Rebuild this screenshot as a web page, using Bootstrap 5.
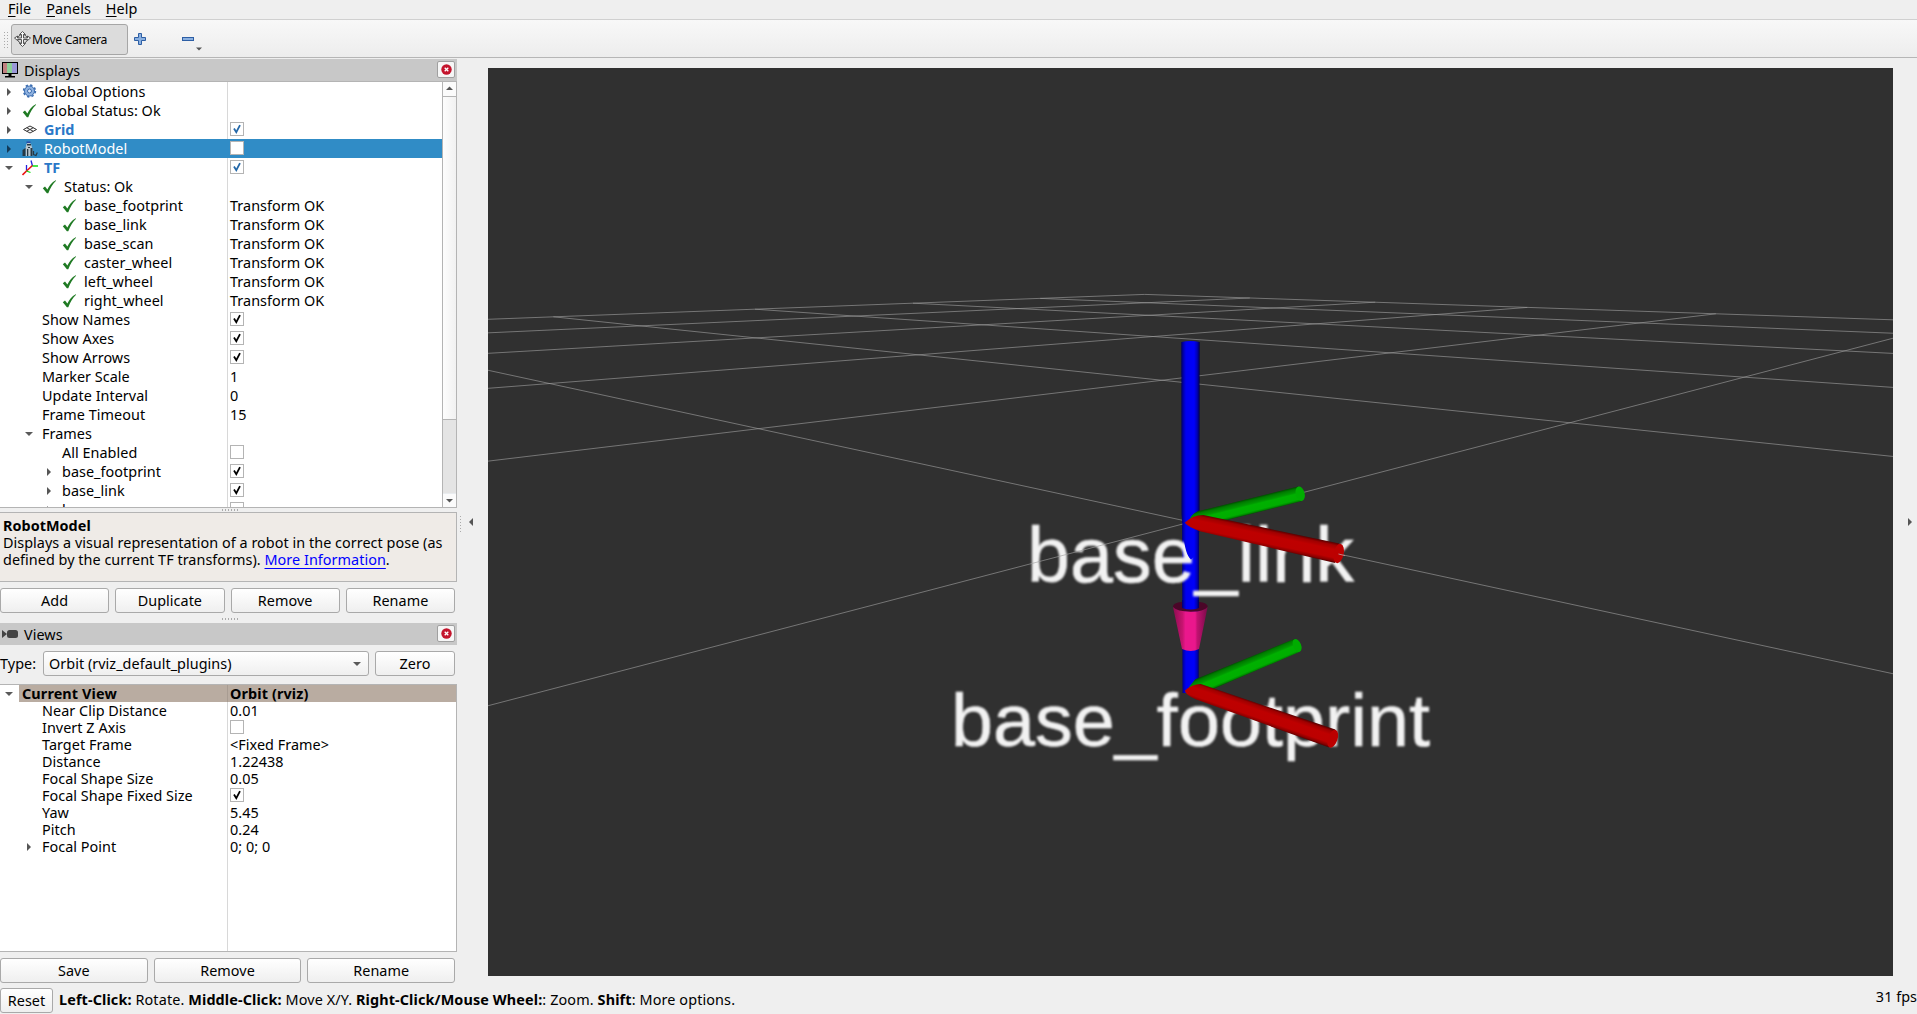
<!DOCTYPE html>
<html lang="en">
<head>
<meta charset="utf-8">
<title>RViz</title>
<link href="https://cdn.jsdelivr.net/npm/bootstrap@5.3.0/dist/css/bootstrap.min.css" rel="stylesheet">
<style>
body{width:1917px;height:1014px;overflow:hidden;background:#efefef;color:#000;font-family:"Noto Sans","Open Sans",sans-serif;font-size:14.4px;letter-spacing:.04px;line-height:17px;white-space:nowrap}
svg{display:block;flex:none}
.menubar{height:20px;border-bottom:1px solid #d0d0d0;padding-left:8px;gap:15px;line-height:18px}
.menubar u{text-underline-offset:2px;text-decoration-thickness:1px}
.toolstrip{height:38px;border-bottom:1px solid #b6b6b6;background:linear-gradient(#f8f8f8,#ededed);padding:4px 0 3px 3px}
.movebtn{width:117px;height:31px;margin-left:3px;padding:0 2px;border:1px solid #a6a6a6;border-radius:3px;background:#dcdcdc;font-size:12.2px;letter-spacing:-.35px;gap:1px}
.dots-v{width:5px;height:17px;background:radial-gradient(circle,#aaa 35%,transparent 45%) 0 0/3px 3px}
.leftdock{width:457px}
.docktitle{height:22px;background:#c8c8c8;padding:0 2px 0 2px}
.docktitle span{margin-left:6px}
.closebtn{width:18px;height:17px;border:1px solid #a0a0a0;border-radius:2px;background:#f6f6f6;margin-bottom:2px}
.treebox{border:1px solid #b4b4b4;border-left:0;background:#fff;overflow:hidden;flex:none}
.t1{height:427px}.t2{height:268px}
.trow{height:19px}
.t2 .trow{height:17px}
.nm{width:228px;height:100%;border-right:1px solid #d8d8d8;padding-left:3px;flex:none}
.vl{padding-left:2px}
.ind1{padding-left:23px}.ind2{padding-left:42px}.ind3{padding-left:62px}
.ex{width:12px;height:12px;margin-right:7px}
.ind2 .ex{margin-left:1px}
.ic{width:16px;height:16px;margin-right:6px}
.sel{background:#308cc6;color:#fff}
.sel .nm{border-color:#308cc6}
.disp{font-weight:700;color:#2a78c8}
.bx{width:14px;height:14px;border:1px solid #b4b4b4;background:#fff;color:#000;margin-top:-1px}
.bx svg{width:12px;height:12px}
.bl{color:#2468a8}
.scrollcol{width:14px;border-left:1px solid #b4b4b4;background:#e4e4e4}
.scrollcol .end{height:14px;background:#fbfbfb}
.scrollcol .thumb{height:324px;background:linear-gradient(90deg,#fdfdfd,#f1f1f1);border-top:1px solid #b4b4b4;border-bottom:1px solid #b4b4b4}
.hdots{width:17px;height:4px;flex:none;background:radial-gradient(circle,#aaa 40%,transparent 50%) 0 1px/3px 2px repeat-x;margin-left:221px}
.hdots.wide{height:10px;background-position:0 5px}
.helpbox{height:70px;flex:none;border:1px solid #b4b4b4;border-left:0;background:#efebe7;padding:4px 0 0 3px;line-height:17px}
.helpbox a{color:#00f;text-decoration:underline;text-underline-offset:3px}
.btnline{gap:6px;margin:6px 2px 0 0}
.qbtn{border:1px solid #a9a9a9;border-radius:3px;background:linear-gradient(#fff,#efefef);height:25px;flex:1 1 0;padding:0;color:#000;font-size:inherit;letter-spacing:inherit;line-height:23px;text-align:center}
.combo{width:326px;flex:none;text-align:left;padding:0 5px 0 5px}
.hdrow .nm{padding-left:3px;background:linear-gradient(90deg,#fff 19px,#b9aca1 19px);border-color:#a89c92}
.hdrow{background:#b9aca1;font-weight:700;letter-spacing:.12px}
.view3d{width:1405px;height:908px;margin-top:10px;background:#303030}
.view3d text{font-family:"Liberation Sans",Arial,sans-serif;fill:#f2f2f2;stroke:#f2f2f2;stroke-width:.6}
.gutterL{width:31px}
.statusline{letter-spacing:.12px}
</style>
<script src="https://cdn.jsdelivr.net/npm/bootstrap@5.3.0/dist/js/bootstrap.bundle.min.js"></script>
</head>
<body class="d-flex flex-column">
<svg width="0" height="0" class="position-absolute">
<symbol id="r" viewBox="0 0 12 12"><path d="M4 2l4 4-4 4z" fill="#555"/></symbol>
<symbol id="d" viewBox="0 0 12 12"><path d="M2 4h8L6 8z" fill="#5a5a5a"/></symbol>
<symbol id="ok" viewBox="0 0 16 16"><path d="M.8 9.200l2.200-1.800 2.400 3.200C7.300 6.500 9.700 3.300 13.700 1.200l.4.6C10.700 5 8.300 9 6.300 14.200H4.900z" fill="#1f7a23"/></symbol>
<symbol id="ck" viewBox="0 0 12 12"><path d="M3 5.500L5.300 9.200 9 2.200" fill="none" stroke="currentColor" stroke-width="1.800"/></symbol>
<symbol id="x" viewBox="0 0 11 11"><circle cx="5.500" cy="5.500" r="5.200" fill="#c4142c"/><path d="M3.700 3.700l3.600 3.600M7.300 3.700L3.700 7.300" stroke="#fff" stroke-width="1.300"/></symbol>
</svg>

<nav class="menubar d-flex"><span><u>F</u>ile</span><span><u>P</u>anels</span><span><u>H</u>elp</span></nav>
<div class="toolstrip d-flex align-items-center">
  <div class="dots-v"></div>
  <div class="movebtn d-flex align-items-center">
    <svg width="17" height="16" viewBox="0 0 17 16" fill="#fafafa" stroke="#444" stroke-width=".9"><ellipse cx="8.500" cy="8" rx="4.800" ry="4.500" fill="none"/><path d="M7.500 7V3.500H5.500L8.500.5l3 3h-2V7h4V5l3 2-3 2.500V8.500h-4v4h2l-3 3-3-3h2v-4h-4v1L.5 7l3-2v2z"/></svg>
    <span>Move Camera</span>
  </div>
  <svg class="ms-1" width="14" height="12" viewBox="-2 0 14 12"><path d="M4.500.5h3v4h4v3h-4v4h-3v-4h-4v-3h4z" fill="#8ab0e0" stroke="#2d5ea4"/></svg>
  <svg width="58" height="26" viewBox="-36 -3 58 26"><rect x=".5" y="8.500" width="11" height="3" fill="#8ab0e0" stroke="#2d5ea4"/><path d="M14 18.500h6l-3 3z" fill="#555"/></svg>
</div>

<div class="d-flex" style="height:926px">
<div class="leftdock d-flex flex-column">
  <div class="docktitle d-flex align-items-center" style="margin-top:1px">
    <svg width="16" height="16" viewBox="0 0 16 16"><rect x=".5" y=".5" width="15" height="11" fill="#c08080" stroke="#000"/><rect x="5" y="1" width="6" height="10" fill="#8cd098"/><rect x="10" y="1" width="5" height="10" fill="#9a98d8"/><path d="M6.500 12h3v2h-3z"/><path d="M3 14h10v1.500H3z"/></svg>
    <span>Displays</span><div class="closebtn ms-auto d-flex align-items-center justify-content-center"><svg width="11" height="11"><use href="#x"/></svg></div>
  </div>
  <div class="treebox t1 d-flex">
    <div class="flex-grow-1">
      <div class="trow d-flex align-items-center"><div class="nm d-flex align-items-center"><svg class="ex"><use href="#r"/></svg><svg class="ic" viewBox="0 0 16 16"><circle cx="7.500" cy="7" r="5" fill="#8fb2e0" stroke="#3a6cb0"/><circle cx="7.500" cy="7" r="5.900" fill="none" stroke="#3a6cb0" stroke-width="1.600" stroke-dasharray="2.300 2.330"/><circle cx="7.500" cy="7" r="2" fill="#dce8f8" stroke="#3a6cb0"/></svg><span>Global Options</span></div></div>
      <div class="trow d-flex align-items-center"><div class="nm d-flex align-items-center"><svg class="ex"><use href="#r"/></svg><svg class="ic"><use href="#ok"/></svg><span>Global Status: Ok</span></div></div>
      <div class="trow d-flex align-items-center"><div class="nm d-flex align-items-center"><svg class="ex"><use href="#r"/></svg><svg class="ic" viewBox="0 0 16 16" fill="none" stroke="#333"><path d="M1.500 7.500L8 4l6.500 3.500L8 11zM4.700 5.700l6.600 3.600M11.300 5.700L4.700 9.300"/></svg><span class="disp">Grid</span></div><div class="vl"><div class="bx bl"><svg><use href="#ck"/></svg></div></div></div>
      <div class="trow sel d-flex align-items-center"><div class="nm d-flex align-items-center"><svg class="ex" viewBox="0 0 12 12"><path d="M4 2l4 4-4 4z" fill="#123a58"/></svg><svg class="ic" viewBox="0 0 16 16"><path d="M3.500 7L4.500 3Q6.500 0 9 3l1.500 5v7H3.500z" fill="#b9c6ce"/><path d="M5 3h4v1.500H5zM.5 9l3-2V15H.5zM5 8h1.300v7H5zM8.500 7h2v8h-2zM6 6h2v1H6z" fill="#263944"/><path d="M4.500 .5h4V2h-4z" fill="#2349a8"/><path d="M11.500 10v3.500l2.500 1 1.300-3" fill="none" stroke="#263944" stroke-width="1.200"/></svg><span>RobotModel</span></div><div class="vl"><div class="bx"></div></div></div>
      <div class="trow d-flex align-items-center"><div class="nm d-flex align-items-center"><svg class="ex"><use href="#d"/></svg><svg class="ic" viewBox="0 0 16 16" fill="none" stroke-width="1.300"><path d="M10.500 6L9 .5M4.500 10.500V5" stroke="#22d"/><path d="M10.500 5.500l-6 5.500L.5 15" stroke="#e11" stroke-width="1.600"/><path d="M10.500 6H16M4.500 11l4 1.500" stroke="#1d1"/></svg><span class="disp">TF</span></div><div class="vl"><div class="bx bl"><svg><use href="#ck"/></svg></div></div></div>
      <div class="trow d-flex align-items-center"><div class="nm ind1 d-flex align-items-center"><svg class="ex"><use href="#d"/></svg><svg class="ic"><use href="#ok"/></svg><span>Status: Ok</span></div></div>
      <div class="trow d-flex align-items-center"><div class="nm ind3 d-flex align-items-center"><svg class="ic"><use href="#ok"/></svg><span>base_footprint</span></div><div class="vl">Transform OK</div></div>
      <div class="trow d-flex align-items-center"><div class="nm ind3 d-flex align-items-center"><svg class="ic"><use href="#ok"/></svg><span>base_link</span></div><div class="vl">Transform OK</div></div>
      <div class="trow d-flex align-items-center"><div class="nm ind3 d-flex align-items-center"><svg class="ic"><use href="#ok"/></svg><span>base_scan</span></div><div class="vl">Transform OK</div></div>
      <div class="trow d-flex align-items-center"><div class="nm ind3 d-flex align-items-center"><svg class="ic"><use href="#ok"/></svg><span>caster_wheel</span></div><div class="vl">Transform OK</div></div>
      <div class="trow d-flex align-items-center"><div class="nm ind3 d-flex align-items-center"><svg class="ic"><use href="#ok"/></svg><span>left_wheel</span></div><div class="vl">Transform OK</div></div>
      <div class="trow d-flex align-items-center"><div class="nm ind3 d-flex align-items-center"><svg class="ic"><use href="#ok"/></svg><span>right_wheel</span></div><div class="vl">Transform OK</div></div>
      <div class="trow d-flex align-items-center"><div class="nm ind2 d-flex align-items-center">Show Names</div><div class="vl"><div class="bx"><svg><use href="#ck"/></svg></div></div></div>
      <div class="trow d-flex align-items-center"><div class="nm ind2 d-flex align-items-center">Show Axes</div><div class="vl"><div class="bx"><svg><use href="#ck"/></svg></div></div></div>
      <div class="trow d-flex align-items-center"><div class="nm ind2 d-flex align-items-center">Show Arrows</div><div class="vl"><div class="bx"><svg><use href="#ck"/></svg></div></div></div>
      <div class="trow d-flex align-items-center"><div class="nm ind2 d-flex align-items-center">Marker Scale</div><div class="vl">1</div></div>
      <div class="trow d-flex align-items-center"><div class="nm ind2 d-flex align-items-center">Update Interval</div><div class="vl">0</div></div>
      <div class="trow d-flex align-items-center"><div class="nm ind2 d-flex align-items-center">Frame Timeout</div><div class="vl">15</div></div>
      <div class="trow d-flex align-items-center"><div class="nm ind1 d-flex align-items-center"><svg class="ex"><use href="#d"/></svg>Frames</div></div>
      <div class="trow d-flex align-items-center"><div class="nm ind3 d-flex align-items-center">All Enabled</div><div class="vl"><div class="bx"></div></div></div>
      <div class="trow d-flex align-items-center"><div class="nm ind2 d-flex align-items-center"><svg class="ex"><use href="#r"/></svg>base_footprint</div><div class="vl"><div class="bx"><svg><use href="#ck"/></svg></div></div></div>
      <div class="trow d-flex align-items-center"><div class="nm ind2 d-flex align-items-center"><svg class="ex"><use href="#r"/></svg>base_link</div><div class="vl"><div class="bx"><svg><use href="#ck"/></svg></div></div></div>
      <div class="trow d-flex align-items-center"><div class="nm ind2 d-flex align-items-center"><svg class="ex"><use href="#r"/></svg>base_scan</div><div class="vl"><div class="bx"></div></div></div>
    </div>
    <div class="scrollcol d-flex flex-column">
      <div class="end"><svg width="13" height="13" viewBox="0 0 13 13"><path d="M3 8h7L6.500 4.500z" fill="#555"/></svg></div>
      <div class="thumb"></div>
      <div class="end mt-auto border-top border-secondary-subtle"><svg width="13" height="13" viewBox="0 0 13 13"><path d="M3 5h7L6.500 8.500z" fill="#555"/></svg></div>
    </div>
  </div>
  <div class="hdots"></div>
  <div class="helpbox"><b>RobotModel</b><br>Displays a visual representation of a robot in the correct pose (as<br>defined by the current TF transforms). <a href="#">More Information</a>.</div>
  <div class="btnline d-flex"><button class="qbtn">Add</button><button class="qbtn">Duplicate</button><button class="qbtn">Remove</button><button class="qbtn">Rename</button></div>
  <div class="hdots wide"></div>
  <div class="docktitle d-flex align-items-center">
    <svg width="16" height="16" viewBox="0 0 16 16" fill="#444"><path d="M0 4l5 4-5 4z"/><rect x="5" y="4" width="11" height="8" rx="2.500"/></svg>
    <span>Views</span><div class="closebtn ms-auto d-flex align-items-center justify-content-center"><svg width="11" height="11"><use href="#x"/></svg></div>
  </div>
  <div class="d-flex align-items-center" style="margin:6px 2px 8px 0"><span style="width:43px">Type:</span>
    <button class="qbtn combo d-flex align-items-center justify-content-between"><span>Orbit (rviz_default_plugins)</span><svg width="12" height="12"><use href="#d"/></svg></button>
    <button class="qbtn" style="margin-left:6px">Zero</button></div>
  <div class="treebox t2 d-flex flex-column">
    <div class="trow hdrow d-flex align-items-center"><div class="nm d-flex align-items-center"><svg class="ex"><use href="#d"/></svg>Current View</div><div class="vl">Orbit (rviz)</div></div>
    <div class="trow d-flex align-items-center"><div class="nm ind2 d-flex align-items-center">Near Clip Distance</div><div class="vl">0.01</div></div>
    <div class="trow d-flex align-items-center"><div class="nm ind2 d-flex align-items-center">Invert Z Axis</div><div class="vl"><div class="bx"></div></div></div>
    <div class="trow d-flex align-items-center"><div class="nm ind2 d-flex align-items-center">Target Frame</div><div class="vl">&lt;Fixed Frame&gt;</div></div>
    <div class="trow d-flex align-items-center"><div class="nm ind2 d-flex align-items-center">Distance</div><div class="vl">1.22438</div></div>
    <div class="trow d-flex align-items-center"><div class="nm ind2 d-flex align-items-center">Focal Shape Size</div><div class="vl">0.05</div></div>
    <div class="trow d-flex align-items-center"><div class="nm ind2 d-flex align-items-center">Focal Shape Fixed Size</div><div class="vl"><div class="bx"><svg><use href="#ck"/></svg></div></div></div>
    <div class="trow d-flex align-items-center"><div class="nm ind2 d-flex align-items-center">Yaw</div><div class="vl">5.45</div></div>
    <div class="trow d-flex align-items-center"><div class="nm ind2 d-flex align-items-center">Pitch</div><div class="vl">0.24</div></div>
    <div class="trow d-flex align-items-center"><div class="nm ind1 d-flex align-items-center"><svg class="ex"><use href="#r"/></svg>Focal Point</div><div class="vl">0; 0; 0</div></div>
    <div class="nm flex-grow-1"></div>
  </div>
  <div class="btnline d-flex"><button class="qbtn">Save</button><button class="qbtn">Remove</button><button class="qbtn">Rename</button></div>
</div>
<div class="gutterL d-flex align-items-start" style="padding:457px 0 0 2px"><div class="dots-v" style="width:3px"></div><svg class="ms-1" width="14" height="14" viewBox="-1 -1 14 14"><path d="M6 2v8L2 6z" fill="#555"/></svg></div>

<svg class="view3d" viewBox="488 68 1405 908">
  <defs>
    <linearGradient id="gb"><stop offset="0" stop-color="#000068"/><stop offset=".13" stop-color="#0000b8"/><stop offset=".25" stop-color="#0000ef"/><stop offset=".7" stop-color="#0000fa"/><stop offset=".87" stop-color="#0000b4"/><stop offset="1" stop-color="#000050"/></linearGradient>
    <linearGradient id="gp"><stop offset="0" stop-color="#8c0c50"/><stop offset=".28" stop-color="#c81470"/><stop offset=".36" stop-color="#ea178c"/><stop offset=".64" stop-color="#ea178c"/><stop offset=".7" stop-color="#c01270"/><stop offset="1" stop-color="#780a48"/></linearGradient>
    <linearGradient id="gg" x1="0" y1="0" x2="0" y2="1"><stop offset="0" stop-color="#004a00"/><stop offset=".14" stop-color="#007c00"/><stop offset=".35" stop-color="#009800"/><stop offset=".45" stop-color="#00b000"/><stop offset=".82" stop-color="#00ae00"/><stop offset=".92" stop-color="#008a00"/><stop offset="1" stop-color="#005000"/></linearGradient>
    <linearGradient id="gr" x1="0" y1="0" x2="0" y2="1"><stop offset="0" stop-color="#500000"/><stop offset=".14" stop-color="#a00000"/><stop offset=".35" stop-color="#be0000"/><stop offset=".75" stop-color="#bc0000"/><stop offset=".9" stop-color="#8c0000"/><stop offset="1" stop-color="#500000"/></linearGradient>
  </defs>
  <path d="M1181.500 342h18L1198.700 690l-5 3h-11.200z" fill="url(#gb)"/>
  <g style="filter:blur(.8px)">
    <text x="1027" y="581.500" font-size="77" textLength="327" lengthAdjust="spacingAndGlyphs">base<tspan dy="-1.500">_</tspan><tspan dy="1.500">link</tspan></text>
    <text x="951" y="746" font-size="74" textLength="479" lengthAdjust="spacingAndGlyphs">base<tspan dy="-1">_</tspan><tspan dy="1">footprint</tspan></text>
  </g>
  <path id="ground" fill="none" stroke="#a0a0a0" stroke-opacity=".62" stroke-width="1"/>
  <path d="M1181.500 342q9-2 18 0V530l-5 26-3.500 3.500q-6-5-7.500-25l-2-20z" fill="url(#gb)"/>
  <!-- arrow head -->
  <ellipse cx="1190.300" cy="606.500" rx="17.300" ry="5.500" fill="#4a0628"/>
  <path d="M1182 600h17v8q-8 3-17 0z" fill="url(#gb)"/>
  <path d="M1173 607q4 4.500 17.300 4.700t17.300-4.700L1199 649q-8 4-17 0z" fill="url(#gp)"/>
  <!-- green axes -->
  <g transform="translate(1190 521) rotate(-13.900)"><path d="M0-1Q2-6 10-7.500L113-7.600V7.600L28 8 0 5z" fill="url(#gg)"/><ellipse cx="113.500" cy="0" rx="4.500" ry="7.400" fill="#00ac00"/></g>
  <g transform="translate(1190 690) rotate(-22.600)"><path d="M0-3L9-8 115-7V7L20 8 0 3z" fill="url(#gg)"/><ellipse cx="116" cy="0" rx="4" ry="6.800" fill="#00ac00"/></g>
  <!-- red axes -->
  <g transform="translate(1190.500 522) rotate(12)"><path d="M-5.500 2Q0-7 11-9.500L150-10V10L11 7Q0 6-5.500 2z" fill="url(#gr)"/><ellipse cx="151.500" cy="0" rx="5" ry="9.800" fill="#bc0000"/></g>
  <g transform="translate(1190.500 689.500) rotate(19.100)"><path d="M-5 3Q0-6 8-8.500L150-9.500V9.500L8 7.500Q-2 7-5 3z" fill="url(#gr)"/><ellipse cx="150.500" cy="0" rx="4.800" ry="9.300" fill="#bc0000"/></g>
  <path d="M1338.500 554L1345 555.600" stroke="#b88" stroke-width="1"/>
</svg>
<div style="width:24px;padding:458px 0 0 11px"><svg width="12" height="12"><use href="#r"/></svg></div>
</div>
<div class="d-flex align-items-center" style="height:30px;padding-bottom:2px">
  <button class="qbtn" style="flex:none;width:53px;margin-top:4px">Reset</button>
  <div class="statusline" style="margin:2px 0 0 6px"><b>Left-Click:</b> Rotate. <b>Middle-Click:</b> Move X/Y. <b>Right-Click/Mouse Wheel:</b>: Zoom. <b>Shift</b>: More options.</div>
  <div class="ms-auto" style="margin-bottom:4px">31 fps</div>
</div>
<script>
// Ground grid: 10 x 10 cells of 1 m, seen by the orbit camera
const dist=1.22438,yaw=5.45,pitch=.24,f=454/Math.tan(Math.PI/8);
const cy=Math.cos(yaw),sy=Math.sin(yaw),cp=Math.cos(pitch),sp=Math.sin(pitch);
function cam(x,y){const dx=x-dist*cy*cp,dy=y-dist*sy*cp,dz=-dist*sp,h=-dx*cy-dy*sy;
  return [-dx*sy+dy*cy,h*sp+dz*cp,h*cp-dz*sp];}
function seg(a,b){a=cam(...a);b=cam(...b);const n=.05;
  if(a[2]<n&&b[2]<n)return'';
  if(a[2]<n)[a,b]=[b,a];
  if(b[2]<n){const t=(a[2]-n)/(a[2]-b[2]);b=a.map((v,i)=>v+(b[i]-v)*t);}
  const p=v=>(1190.5+f*v[0]/v[2]).toFixed(1)+' '+(522-f*v[1]/v[2]).toFixed(1);
  return'M'+p(a)+'L'+p(b);}
let d='';
for(let i=-5;i<=5;i++)d+=seg([i,-5],[i,5])+seg([-5,i],[5,i]);
document.getElementById('ground').setAttribute('d',d);
</script>
</body>
</html>
